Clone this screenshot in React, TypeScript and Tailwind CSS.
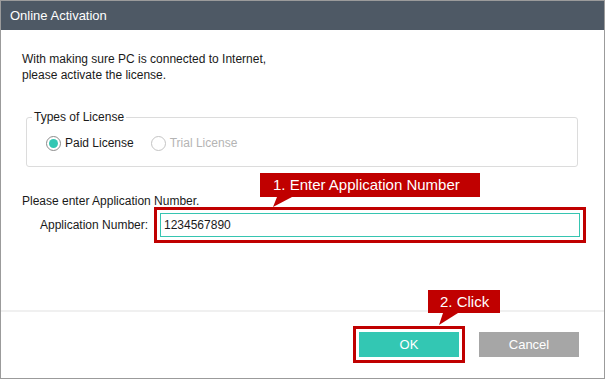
import * as React from 'react';

type CalloutProps = {
  text: string;
  className: string;
  pointer: string; // svg polygon points, relative to box bottom-left
};

function Callout({ text, className, pointer }: CalloutProps) {
  return (
    <div className={`absolute bg-[#c00000] text-white text-[15px] leading-[23px] font-['Liberation_Sans',Arial,sans-serif] ${className}`}>
      {text}
      <svg className="absolute left-0 top-full overflow-visible" width="40" height="14">
        <polygon points={pointer} fill="#c00000" />
      </svg>
    </div>
  );
}

function Radio({ label, checked, disabled }: { label: string; checked?: boolean; disabled?: boolean }) {
  return (
    <div className="flex items-center gap-[4px]">
      <span
        className={`w-[15px] h-[15px] rounded-full border flex items-center justify-center ${
          disabled ? 'border-[#c4c4c4]' : 'border-[#8c8c8c]'
        }`}
      >
        {checked && <span className="w-[9px] h-[9px] rounded-full bg-[#33c7b3]" />}
      </span>
      <span className={disabled ? 'text-[#b4b4b4]' : 'text-[#1a1a1a]'}>{label}</span>
    </div>
  );
}

export default function App() {
  return (
    <div className="relative w-[605px] h-[379px] border border-[#9b9b9b] bg-white flex flex-col font-['Liberation_Sans',Arial,sans-serif] text-[12px] text-[#1a1a1a]">
      {/* title bar */}
      <div className="h-[29px] bg-[#4e5965] text-white text-[13px] flex items-center pl-[9px]">
        Online Activation
      </div>

      {/* body */}
      <div className="flex-1 px-[21px] pt-[21px]">
        <p className="leading-[16px]">
          With making sure PC is connected to Internet,
          <br />
          please activate the license.
        </p>

        <fieldset className="mt-[26px] ml-[4px] mr-[5px] border border-[#dcdcdc] rounded-[3px] pl-[5px] pb-[15px]">
          <legend className="px-[2px] leading-[16px]">Types of License</legend>
          <div className="flex items-center gap-[17px] ml-[14px] mt-[10px] leading-[16px]">
            <Radio label="Paid License" checked />
            <Radio label="Trial License" disabled />
          </div>
        </fieldset>

        <p className="mt-[26px] leading-[16px]">Please enter Application Number.</p>

        <div className="flex items-center mt-[4px]">
          <span className="w-[138px] pl-[18px]">Application Number:</span>
          <div className="w-[420px] h-[24px] border border-[#36c5b1] flex items-center px-[3px] outline-3 outline-[#c00000] outline-offset-3">
            1234567890
          </div>
        </div>
      </div>

      {/* footer */}
      <div className="h-[68px] border-t-2 border-[#f0f0f0] flex justify-end gap-[20px] pt-[20px] pr-[25px]">
        <button className="w-[100px] h-[25px] bg-[#33c7b3] text-white text-[13px] outline-3 outline-[#c00000] outline-offset-3">
          OK
        </button>
        <button className="w-[100px] h-[25px] bg-[#a6a6a6] text-white text-[13px]">Cancel</button>
      </div>

      <Callout
        text="1. Enter Application Number"
        className="left-[259px] top-[172px] w-[220px] h-[24px] pl-[13px]"
        pointer="13,10 17,0 32,0"
      />
      <Callout
        text="2. Click"
        className="left-[427px] top-[289px] w-[72px] h-[23px] pl-[12px]"
        pointer="11,12 15,0 30,0"
      />
    </div>
  );
}
